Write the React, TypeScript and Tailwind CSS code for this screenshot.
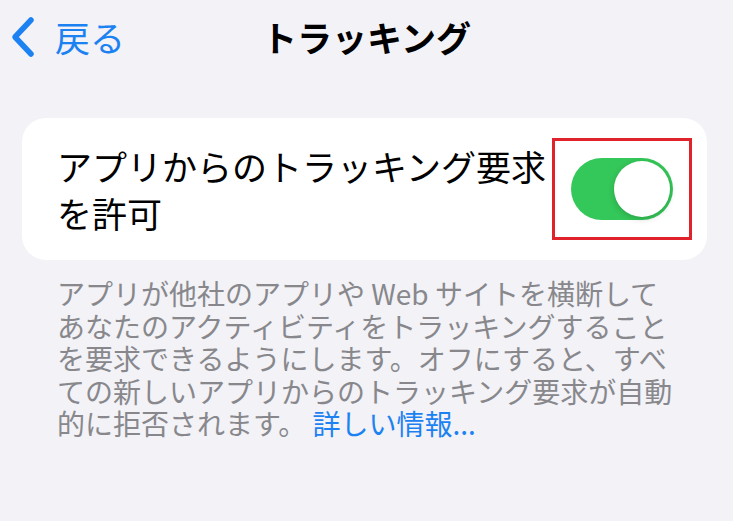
export default function App() {
  const font = { fontFamily: '"Noto Sans CJK JP", "Noto Sans", sans-serif' };
  return (
    <div className="w-[733px] h-[521px] bg-[#f2f2f7] overflow-hidden" style={font}>
      {/* nav bar */}
      <div className="relative h-[76px] flex items-center">
        <div className="flex items-center pl-[10px] text-[#1c82f2] mt-[-3px]">
          <svg width="26" height="42" viewBox="0 0 26 42" className="mt-[1px]">
            <path d="M21 4 L5 21 L21 38" fill="none" stroke="currentColor" strokeWidth="5.5" strokeLinecap="round" strokeLinejoin="round" />
          </svg>
          <span className="ml-[19px] text-[35px] leading-none">戻る</span>
        </div>
        <div className="absolute inset-0 flex items-center justify-center pointer-events-none mt-[-3px]">
          <span className="text-[35px] font-bold leading-none text-black">トラッキング</span>
        </div>
      </div>

      {/* card */}
      <div className="ml-[22px] mr-[26px] mt-[42px] h-[142px] bg-white rounded-[24px] flex items-center pl-[35px] pr-[15px]">
        <div className="flex-1 text-[35px] leading-[47px] text-black">
          アプリからのトラッキング要求
          <br />
          を許可
        </div>
        <div className="border-[3px] border-[#e0222b] w-[140px] h-[102px] flex items-center justify-center">
          <div className="w-[102px] h-[62px] rounded-full bg-[#34c759] flex items-center justify-end pr-[3px]">
            <div className="w-[56px] h-[56px] rounded-full bg-white shadow-[0_2px_6px_rgba(0,0,0,0.18)]" />
          </div>
        </div>
      </div>

      {/* footer */}
      <div className="mt-[17px] pl-[57px] pr-[20px] text-[28px] leading-[32.5px] text-[#88888c]">
        アプリが他社のアプリや Web サイトを横断して
        <br />
        あなたのアクティビティをトラッキングすること
        <br />
        を要求できるようにします。オフにすると、すべ
        <br />
        ての新しいアプリからのトラッキング要求が自動
        <br />
        的に拒否されます。 <span className="text-[#1c82f2]">詳しい情報...</span>
      </div>
    </div>
  );
}
